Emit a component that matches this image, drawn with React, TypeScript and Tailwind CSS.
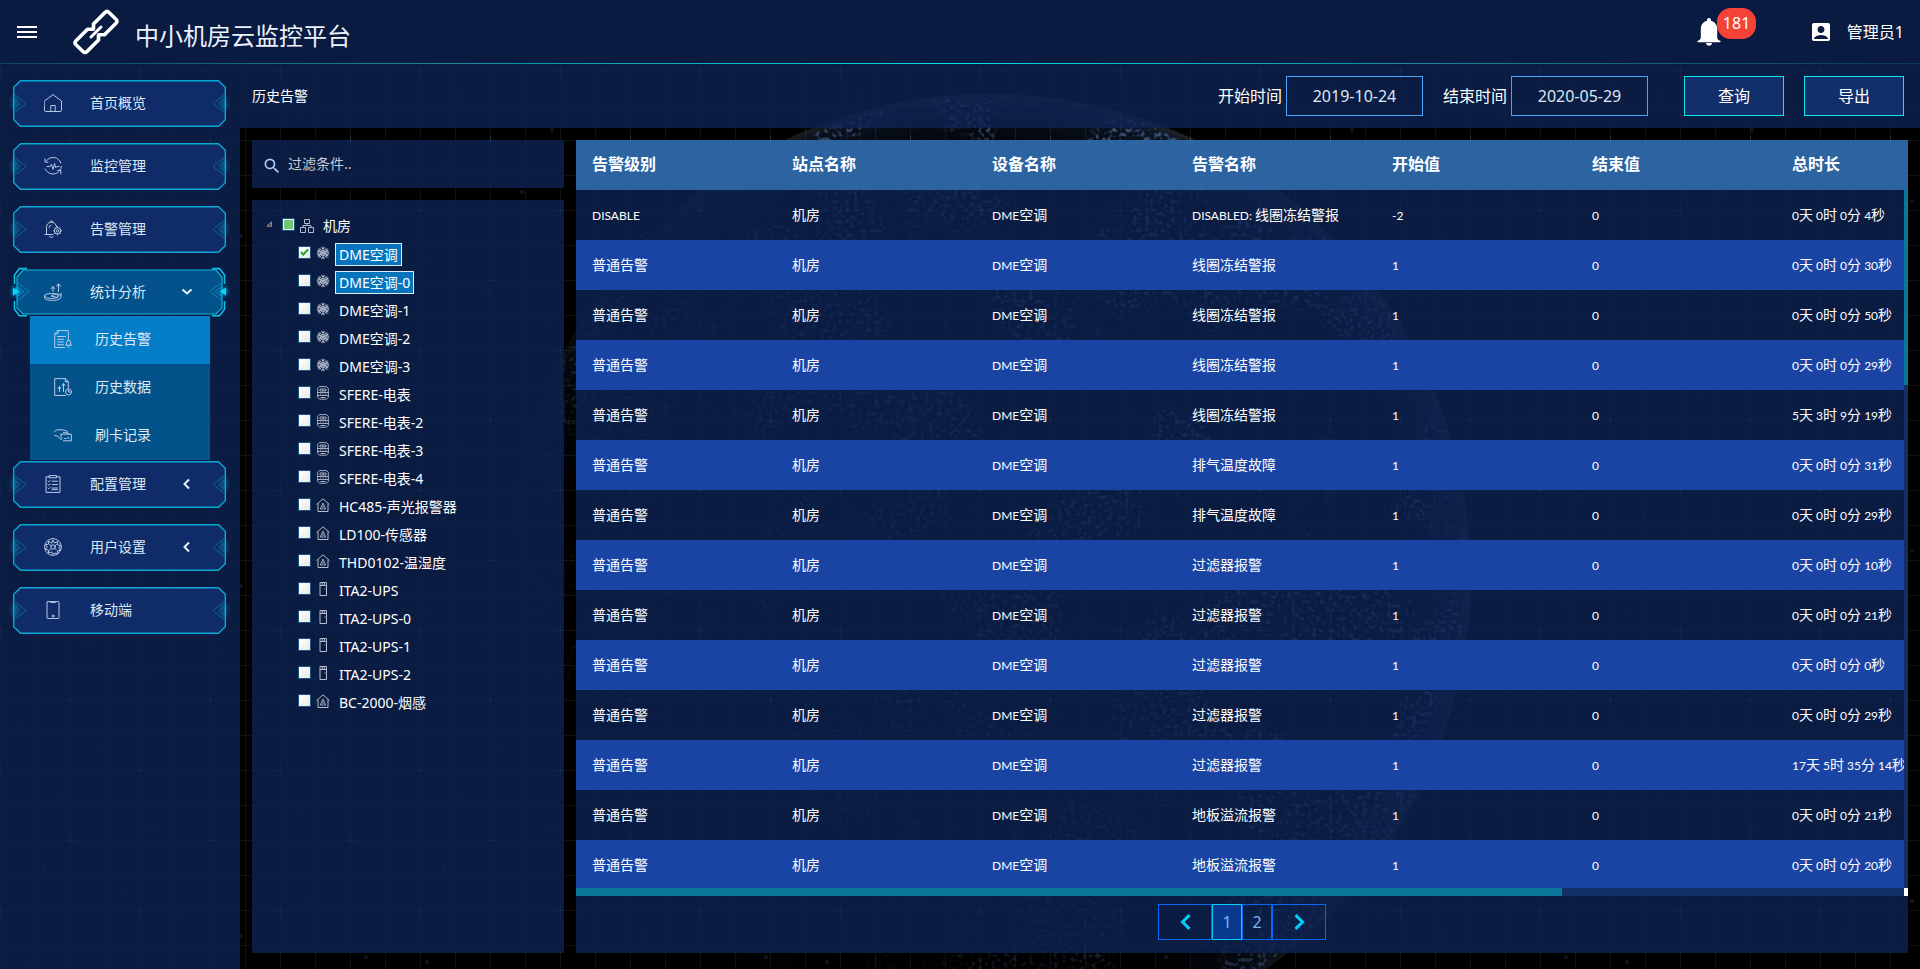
import type { ReactNode } from 'react';
import { MdAccountBox, MdSearch } from 'react-icons/md';

/* ---------- data ---------- */

type DeviceKind = 'fan' | 'meter' | 'house' | 'ups';

const devices: { name: string; kind: DeviceKind; checked?: boolean; selected?: boolean }[] = [
  { name: 'DME空调', kind: 'fan', checked: true, selected: true },
  { name: 'DME空调-0', kind: 'fan', selected: true },
  { name: 'DME空调-1', kind: 'fan' },
  { name: 'DME空调-2', kind: 'fan' },
  { name: 'DME空调-3', kind: 'fan' },
  { name: 'SFERE-电表', kind: 'meter' },
  { name: 'SFERE-电表-2', kind: 'meter' },
  { name: 'SFERE-电表-3', kind: 'meter' },
  { name: 'SFERE-电表-4', kind: 'meter' },
  { name: 'HC485-声光报警器', kind: 'house' },
  { name: 'LD100-传感器', kind: 'house' },
  { name: 'THD0102-温湿度', kind: 'house' },
  { name: 'ITA2-UPS', kind: 'ups' },
  { name: 'ITA2-UPS-0', kind: 'ups' },
  { name: 'ITA2-UPS-1', kind: 'ups' },
  { name: 'ITA2-UPS-2', kind: 'ups' },
  { name: 'BC-2000-烟感', kind: 'house' },
];

const columns = ['告警级别', '站点名称', '设备名称', '告警名称', '开始值', '结束值', '总时长'];

const rows: string[][] = [
  ['DISABLE', '机房', 'DME空调', 'DISABLED: 线圈冻结警报', '-2', '0', '0天 0时 0分 4秒'],
  ['普通告警', '机房', 'DME空调', '线圈冻结警报', '1', '0', '0天 0时 0分 30秒'],
  ['普通告警', '机房', 'DME空调', '线圈冻结警报', '1', '0', '0天 0时 0分 50秒'],
  ['普通告警', '机房', 'DME空调', '线圈冻结警报', '1', '0', '0天 0时 0分 29秒'],
  ['普通告警', '机房', 'DME空调', '线圈冻结警报', '1', '0', '5天 3时 9分 19秒'],
  ['普通告警', '机房', 'DME空调', '排气温度故障', '1', '0', '0天 0时 0分 31秒'],
  ['普通告警', '机房', 'DME空调', '排气温度故障', '1', '0', '0天 0时 0分 29秒'],
  ['普通告警', '机房', 'DME空调', '过滤器报警', '1', '0', '0天 0时 0分 10秒'],
  ['普通告警', '机房', 'DME空调', '过滤器报警', '1', '0', '0天 0时 0分 21秒'],
  ['普通告警', '机房', 'DME空调', '过滤器报警', '1', '0', '0天 0时 0分 0秒'],
  ['普通告警', '机房', 'DME空调', '过滤器报警', '1', '0', '0天 0时 0分 29秒'],
  ['普通告警', '机房', 'DME空调', '过滤器报警', '1', '0', '17天 5时 35分 14秒'],
  ['普通告警', '机房', 'DME空调', '地板溢流报警', '1', '0', '0天 0时 0分 21秒'],
  ['普通告警', '机房', 'DME空调', '地板溢流报警', '1', '0', '0天 0时 0分 20秒'],
];

/* ---------- icons ---------- */

function LineIcon({ size = 18, children }: { size?: number; children: ReactNode }) {
  return (
    <svg
      width={size}
      height={size}
      viewBox="0 0 18 18"
      fill="none"
      stroke="#b9c8e6"
      strokeWidth="1"
      strokeLinecap="round"
      strokeLinejoin="round"
      aria-hidden="true"
      className="shrink-0"
    >
      {children}
    </svg>
  );
}

const HomeIcon = () => (
  <LineIcon>
    <path d="M.5 7 9 .6 17.500 7v9.500q0 1-1 1h-15q-1 0-1-1z" />
    <path d="M6.800 17.500v-6h4.400v6" />
  </LineIcon>
);

const PulseIcon = () => (
  <LineIcon>
    <path d="M2.500 3.500A8.300 8.300 0 0 1 16.800 6M17.400 9.500a8.400 8.400 0 0 1-1.600 4M14.800 14.700A8.300 8.300 0 0 1 1.200 12" />
    <path d="M1 1.800v3.400h3M16.800 16.800v-3.300h-3" />
    <path d="M3 9.500h3l1.400-2.300L9 12.400l1.500-6 1.300 4.400 1-1.300H15" />
  </LineIcon>
);

const BellGearIcon = () => (
  <LineIcon>
    <path d="M1 14.500h8M2.500 14.300V7.500a5 5 0 0 1 10-.8M6 2.400a1.500 1.500 0 0 1 3 0M5.500 16.200a2 2 0 0 0 3.600.3" />
    <path d="M5 7.500a2.600 2.600 0 0 1 2-2.300" />
    <circle cx="13.500" cy="10.800" r="3.200" />
    <circle cx="13.500" cy="10.800" r="1.200" />
    <path d="M13.500 6.600v1M13.500 14v1M9.500 10.800h.8M16.700 10.800h.8M10.600 7.900l.7.700M15.700 13l.7.700M16.400 7.900l-.7.700M11.300 13l-.7.700" />
  </LineIcon>
);

const StatsIcon = () => (
  <LineIcon>
    <ellipse cx="7.500" cy="13" rx="7" ry="2.500" />
    <path d="M.5 13v1.800c0 1.500 3 2.600 7 2.600 5.500 0 9-1 9.500-3.400v-3.600" />
    <path d="M7.500 13 11 10.800c3 0 5.500.6 6 1.800M7.500 13l6 1.600" />
    <path d="M9 8.500V4M7.400 5.500 9 3.500l1.600 2M14.500 8.500V1.200M12.600 3.200l1.900-2.400 1.900 2.400" />
  </LineIcon>
);

const AlarmDocIcon = () => (
  <LineIcon>
    <path d="M10.500 17.500h-9.800V3.800L4 .6h10.300v8M.7 3.800H4V.6" />
    <path d="M3.500 6.500h8M3.500 9.300h6M3.500 12h6M3.500 14.700h6" />
    <path d="M11.800 15.200h5.700M12.600 15v-2.600a2 2 0 0 1 4 0V15M14 17h1.300M14.600 9.500v.8" />
  </LineIcon>
);

const DataDocIcon = () => (
  <LineIcon>
    <path d="M11.500 17.500H.7V.6h10.600l3 3.200v7M11.300.6v3.200h3" />
    <path d="M5.500 13.500V9M4 10.500l1.500-2 1.500 2M9.500 13.500V6M8 7.500l1.500-2 1.500 2" />
    <circle cx="14.500" cy="14" r="3" />
    <path d="M14.500 12.300V14h1.400" />
  </LineIcon>
);

const CardHandIcon = () => (
  <LineIcon>
    <path d="M.6 5.500 3 3.800h5.500L12.800 5c1.300.5 1.300 1.800 0 1.900l-3.300-.3M.6 9.500l2.600.4 3.300 3.200c1.200.8 2.200-.2 1.500-1.300" />
    <path d="M7 8.200h10.400v6.600H9.500M12.800 6.800l2.500 1.400M7 8.200v3" />
    <path d="M10.500 12.500h1M13 12.500l1.200-1.400 1 1.200" />
  </LineIcon>
);

const ClipboardIcon = () => (
  <LineIcon>
    <path d="M5.500 1.800H2v15.600h14V1.800h-3.500M5.500.6h7v2.200h-7z" />
    <path d="M8 6.200h5.500M8 9.600h5.500M8 13h5.500M8 14.600h5.500" />
    <path d="m4 6 .8.8L6 5.500M4 9.500l.8.800L6 9M4 13l.8.800L6 12.500" />
  </LineIcon>
);

const UserSettingsIcon = () => (
  <LineIcon>
    <circle cx="9" cy="9" r="8.400" />
    <circle cx="9" cy="9" r="2.200" />
    <path d="M9 2.200 10.500 5l2.900-1.400.2 3.200 2.900.7-1.900 2.400 1.900 2.300-3 .9-.2 3-2.900-1.200L9 16.500l-1.500-2.600-2.900 1.200-.2-3-3-.9 1.900-2.300L1.500 6.800l2.900-.7.2-3.100L7.500 5z" />
    <path d="M5.500 6.500 7.200 8M12.500 6.500 10.800 8M5.500 12l1.700-1.500M12.500 12l-1.700-1.500" />
  </LineIcon>
);

const PhoneIcon = () => (
  <LineIcon>
    <rect x="3" y=".6" width="12" height="16.900" rx=".8" />
    <path d="M6.500.8v.8h5V.8" />
    <circle cx="9" cy="15" r="1" />
  </LineIcon>
);

function TreeIcon({ kind }: { kind: DeviceKind | 'site' }) {
  return (
    <svg
      width="14"
      height="14"
      viewBox="0 0 14 14"
      fill="none"
      stroke="#b3bccd"
      strokeWidth="1"
      aria-hidden="true"
      className="shrink-0"
    >
      {kind === 'site' && (
        <path d="M4.500.5h5v4h-5zM.5 8.500h5v5h-5zM8.500 8.500h5v5h-5zM7 4.500v2M3 8.500v-2h8v2" />
      )}
      {kind === 'fan' && (
        <g strokeWidth="1">
          <path d="M7 .8v12.400M1.600 3.900l10.800 6.200M1.600 10.100l10.800-6.200M.8 7h12.400" />
          <path d="M4 2.500 5.500 5M10 2.500 8.500 5M4 11.500 5.500 9M10 11.500 8.500 9" />
          <path d="m5 1.300 2 1.700 2-1.700M5 12.700l2-1.700 2 1.700M1 6l2.500-.5L3 2.400M13 8l-2.500.5.5 3.100M1 8l2.500.5-.5 3.100M13 6l-2.500-.5.500-3.100" />
          <circle cx="7" cy="7" r="2.400" />
        </g>
      )}
      {kind === 'meter' && (
        <g strokeWidth=".9">
          <path d="M3.500.6h7l1.800 1.700v9l-1.800 1.900h-7L1.700 11.300v-9z" />
          <path d="M4 3h6v2H4zM1 6.500h12M7 3v2M1 9.500h12M4 8h1.200M6.500 8h1.200M9 8h1.200M4.500 11.500h5" />
        </g>
      )}
      {kind === 'house' && (
        <g>
          <path d="M.6 6.500 7 .8l6.400 5.700M2 5.500v8h10v-8" />
          <path d="m7 5-2.700 6h5.400zM7 7.500v2.500" strokeWidth=".9" />
        </g>
      )}
      {kind === 'ups' && <path d="M4 .5h6.500v13H4zM4 3.500h6.500M6.200.5v3M8.300.5v3M8.500 7h1" />}
    </svg>
  );
}

function ChainLogo() {
  return (
    <svg width="46" height="46" viewBox="0 0 46 46" fill="none" stroke="#fff" aria-hidden="true">
      <g strokeWidth="3.600" strokeLinejoin="round" strokeLinecap="round">
        <path d="M20.500 20v-5L32 3.500q2-2 4 0l7 6.700q2 2 0 4L31.500 25.700h-5" />
        <path d="M25.500 26v5L14 42.500q-2 2-4 0l-7-6.700q-2-2 0-4L14.500 20.300h5" />
      </g>
      <path d="M18 28 28 18" strokeWidth="3" strokeLinecap="round" />
    </svg>
  );
}

/* ---------- sidebar ---------- */

function ButtonFrame({ active }: { active?: boolean }) {
  return (
    <svg
      width="100%"
      height="100%"
      viewBox="0 0 213 47"
      preserveAspectRatio="none"
      fill="none"
      aria-hidden="true"
      className="absolute inset-0 overflow-visible"
    >
      {active ? (
        <>
          <path d="M10 1h193l6 7v31l-6 6H10l-6-6V8z" fill="#03528c" stroke="#0bb5dd" strokeWidth="1.200" />
          <path
            d="M14-.4H6.500L1.500 6v9M199-.4h7.500l5 6.400v9M14 46.700H6.500l-5-6.400V32M199 46.700h7.500l5-6.400V32"
            stroke="#08c4ec"
            strokeWidth="1.600"
          />
          <path d="m4 13 12 9.500L4 32M4 17.500l7 5-7 5" stroke="#0b88b0" />
          <path d="m209 13-12 9.500 12 9.500M209 17.500l-7 5 7 5" stroke="#0b88b0" />
          <path d="m0 17.500 7 5-7 5zM213 17.500l-6 5 6 5z" fill="#00d8ff" filter="url(#glow)" />
          <path d="m0 18.500 7 4-7 4zM213 18.500l-6 4 6 4z" fill="#00d8ff" />
        </>
      ) : (
        <>
          <path d="M7.500.7h198l6.800 6.500v32.600l-6.800 6.500H7.500L.7 39.800V7.200z" fill="#0f2c68" />
          <path d="M1.500 17v12M211.500 17v12" stroke="#00a6d6" strokeOpacity=".55" strokeWidth="4" filter="url(#glow)" />
          <path d="M7.500.7h198l6.800 6.500v32.600l-6.800 6.500H7.500L.7 39.800V7.200z" stroke="#08a9d3" strokeWidth="1.400" />
          <path d="m1 14 12 9.500L1 33M1 18.500l6 5-6 5" stroke="#0a6591" />
          <path d="m212 14-12 9.500 12 9.500M212 18.500l-6 5 6 5" stroke="#0a6591" />
        </>
      )}
    </svg>
  );
}

function Caret({ open }: { open?: boolean }) {
  return (
    <svg width="12" height="12" viewBox="0 0 12 12" fill="none" stroke="#e8eef8" strokeWidth="2" aria-hidden="true">
      <path d={open ? 'm1.500 3.500 4.500 4 4.500-4' : 'M8 1.500 3.500 6 8 10.500'} />
    </svg>
  );
}

function MenuButton({ icon, label, caret, active }: { icon: ReactNode; label: string; caret?: boolean; active?: boolean }) {
  return (
    <button type="button" className="relative flex h-[47px] w-full items-center pb-0.5 pl-[31px] pr-[33px] text-sm text-[#dfe8f6]">
      <ButtonFrame active={active} />
      <span className="relative">{icon}</span>
      <span className="relative ml-7 flex-1 text-left">{label}</span>
      {caret && (
        <span className="relative">
          <Caret open={active} />
        </span>
      )}
    </button>
  );
}

function SubItem({ icon, label, active }: { icon: ReactNode; label: string; active?: boolean }) {
  return (
    <li className={active ? 'bg-[#037ec7]' : ''}>
      <a href="#" className="flex h-12 items-center gap-[23px] pb-0.5 pl-6 text-sm text-[#dfe8f6]">
        {icon}
        {label}
      </a>
    </li>
  );
}

function Sidebar() {
  return (
    <nav className="w-60 shrink-0 bg-[#0d2352]/80 pt-4 pl-[13px] pr-[14px]">
      <ul className="flex flex-col gap-4">
        <li><MenuButton icon={<HomeIcon />} label="首页概览" /></li>
        <li><MenuButton icon={<PulseIcon />} label="监控管理" /></li>
        <li><MenuButton icon={<BellGearIcon />} label="告警管理" /></li>
        <li>
          <MenuButton icon={<StatsIcon />} label="统计分析" caret active />
          <ul className="ml-[17px] mr-4 bg-[#04528a]">
            <SubItem icon={<AlarmDocIcon />} label="历史告警" active />
            <SubItem icon={<DataDocIcon />} label="历史数据" />
            <SubItem icon={<CardHandIcon />} label="刷卡记录" />
          </ul>
        </li>
        <li className="-mt-[15px]"><MenuButton icon={<ClipboardIcon />} label="配置管理" caret /></li>
        <li><MenuButton icon={<UserSettingsIcon />} label="用户设置" caret /></li>
        <li><MenuButton icon={<PhoneIcon />} label="移动端" /></li>
      </ul>
    </nav>
  );
}

/* ---------- backdrop ---------- */

const specks = [
  [18, 22], [61, 96], [103, 48], [152, 130], [201, 71], [256, 18], [298, 112], [333, 60], [377, 146], [44, 168],
  [122, 192], [183, 214], [241, 236], [312, 201], [366, 257], [27, 262], [88, 291], [147, 322], [219, 301], [285, 338],
];

function Backdrop() {
  return (
    <svg width="100%" height="100%" className="absolute inset-0 -z-10 bg-black" aria-hidden="true">
      <defs>
        <pattern id="grid" width="140" height="140" patternUnits="userSpaceOnUse">
          <path
            d="M.5 0v140M35.500 0v140M70.500 0v140M105.500 0v140M0 .5h140M0 35.500h140M0 70.500h140M0 105.500h140"
            stroke="#7d8da8"
            strokeOpacity=".12"
          />
          <path d="M0 70.500h4M136 70.500h4M.5 66v9M66 .5h9M70.500 0v4M70.500 136v4" stroke="#9fb0cc" strokeOpacity=".2" />
        </pattern>
        <pattern id="specks" width="400" height="350" patternUnits="userSpaceOnUse">
          {specks.map(([x, y]) => (
            <circle key={`${x}-${y}`} cx={x} cy={y} r="2" fill="#5e7fb8" fillOpacity=".18" />
          ))}
        </pattern>
        <radialGradient id="rim">
          <stop offset=".86" stopColor="#1d3a6b" stopOpacity="0" />
          <stop offset=".98" stopColor="#2a4a80" stopOpacity=".28" />
          <stop offset="1" stopColor="#6d7076" stopOpacity=".3" />
        </radialGradient>
        <linearGradient id="fade" gradientUnits="userSpaceOnUse" x1="520" y1="720" x2="1080" y2="260">
          <stop offset="0" stopColor="#fff" stopOpacity="0" />
          <stop offset="1" stopColor="#fff" />
        </linearGradient>
        <mask id="lit">
          <rect width="100%" height="100%" fill="url(#fade)" />
        </mask>
        <filter id="dots" x="0" y="0" width="1" height="1">
          <feTurbulence type="fractalNoise" baseFrequency=".009" numOctaves="3" seed="7" />
          <feColorMatrix values="0 0 0 0 0  0 0 0 0 0  0 0 0 0 0  9 0 0 0 -4.200" result="land" />
          <feTurbulence type="fractalNoise" baseFrequency=".24" numOctaves="1" seed="3" />
          <feColorMatrix values="0 0 0 0 .14  0 0 0 0 .28  0 0 0 0 .6  0 5 0 0 -2.500" />
          <feComposite in2="land" operator="in" />
          <feComposite in2="SourceAlpha" operator="in" />
        </filter>
        <filter id="glow" x="-400%" y="-100%" width="900%" height="300%">
          <feGaussianBlur stdDeviation="2" />
        </filter>
      </defs>
      <g mask="url(#lit)">
        <circle cx="990" cy="575" r="481" fill="url(#rim)" />
        <circle cx="990" cy="575" r="478" fill="#fff" filter="url(#dots)" opacity=".5" />
      </g>
      <rect width="100%" height="100%" fill="url(#grid)" />
      <rect width="100%" height="100%" fill="url(#specks)" />
    </svg>
  );
}

/* ---------- top bar ---------- */

function TopBar() {
  return (
    <header className="shrink-0 bg-[#0a1b42]">
      <div className="flex h-[63px] items-center pl-[17px] pr-4">
        <button type="button" aria-label="切换菜单" className="flex w-5 flex-col gap-[3px]">
          <span className="h-0.5 bg-white" />
          <span className="h-0.5 bg-white" />
          <span className="h-0.5 bg-white" />
        </button>
        <a href="#" className="ml-9 flex items-center gap-4">
          <ChainLogo />
          <h1 className="pt-2 text-2xl leading-9 text-[#eef3fb]">中小机房云监控平台</h1>
        </a>
        <button type="button" aria-label="告警通知" className="relative ml-auto h-7 w-6">
          <svg width="24" height="28" viewBox="0 0 24 28" fill="#fff" aria-hidden="true">
            <path d="M12 0c1.200 0 2 .8 2 2v.8c3.800.9 6.200 4.200 6.200 8.200v8.500c0 1.700 1.200 2.500 2.800 3.200.9.400.8 1.500 0 1.500H1c-.8 0-.9-1.100 0-1.500 1.600-.7 2.800-1.500 2.800-3.200V11c0-4 2.400-7.300 6.200-8.200V2c0-1.200.8-2 2-2z" />
            <path d="M9 25h6c-.2 1.700-1.400 2.700-3 2.700S9.200 26.700 9 25z" />
          </svg>
          <span className="absolute -top-2.5 left-5 rounded-[14px] bg-[#f44336] px-1.5 py-1 text-base leading-[23px] text-white">181</span>
        </button>
        <a href="#" className="ml-[88px] flex items-center gap-3.5 text-base text-white">
          <MdAccountBox size={24} />
          管理员1
        </a>
      </div>
      <div className="h-px bg-linear-to-r from-[#0d4562] via-[#05e0e0] to-[#0d3558]" />
    </header>
  );
}

/* ---------- toolbar ---------- */

function DateField({ id, label, value }: { id: string; label: string; value: string }) {
  return (
    <div className="flex items-center gap-1">
      <label htmlFor={id}>{label}</label>
      <input
        id={id}
        type="text"
        defaultValue={value}
        className="h-10 w-[137px] border border-[#4aa3f7] bg-transparent text-center text-[#dde7f5]"
      />
    </div>
  );
}

function Toolbar() {
  const button = 'h-10 w-[100px] border border-[#0ce8ec] bg-[#122f6b] text-white';
  return (
    <div className="flex h-16 shrink-0 items-center bg-[#0d2352]/80 pl-3 pr-4 text-base text-white">
      <h2 className="mr-auto text-sm">历史告警</h2>
      <div className="flex gap-5">
        <DateField id="start" label="开始时间" value="2019-10-24" />
        <DateField id="end" label="结束时间" value="2020-05-29" />
      </div>
      <div className="ml-9 flex gap-5">
        <button type="button" className={button}>查询</button>
        <button type="button" className={button}>导出</button>
      </div>
    </div>
  );
}

/* ---------- device tree ---------- */

function TreeCheck({ id, state }: { id: string; state: 'on' | 'off' | 'partial' }) {
  return (
    <span className="relative -mt-1 size-[13px] shrink-0">
      <input
        id={id}
        type="checkbox"
        defaultChecked={state === 'on'}
        className="block size-[13px] appearance-none border border-[#1c5180] bg-linear-to-br from-white to-[#e9e9e4]"
      />
      {state === 'on' && (
        <svg width="9" height="9" viewBox="0 0 9 9" className="pointer-events-none absolute top-0.5 left-0.5" fill="none" stroke="#1da526" strokeWidth="2" aria-hidden="true">
          <path d="m1 4 2.300 2.600L8 1.300" />
        </svg>
      )}
      {state === 'partial' && <span className="pointer-events-none absolute inset-0.5 bg-[#71c671]" />}
    </span>
  );
}

function DeviceTree() {
  return (
    <div className="flex-1 bg-[#0d2352]/80 pt-3 text-sm text-white">
      <div className="flex h-7 items-center pl-3.5">
        <svg width="6" height="6" viewBox="0 0 6 6" className="-mt-1 mr-2.5 shrink-0" fill="#444" stroke="#a8a8a8" strokeWidth=".8" aria-hidden="true">
          <path d="M5.500.8v4.700L.8 5z" />
        </svg>
        <TreeCheck id="site" state="partial" />
        <span className="mx-[5px] pr-1"><TreeIcon kind="site" /></span>
        <label htmlFor="site">机房</label>
      </div>
      <ul>
        {devices.map((d, i) => (
          <li key={d.name} className="flex h-7 items-center pl-[46px]">
            <TreeCheck id={`device-${i}`} state={d.checked ? 'on' : 'off'} />
            <span className="mx-[5px] pb-0.5"><TreeIcon kind={d.kind} /></span>
            <label
              htmlFor={`device-${i}`}
              className={
                d.selected
                  ? 'border border-[#dcecf8] bg-[#0674bd] px-[3px] leading-[21px]'
                  : 'border border-transparent px-[3px] leading-[21px]'
              }
            >
              {d.name}
            </label>
          </li>
        ))}
      </ul>
    </div>
  );
}

/* ---------- alarm table ---------- */

/* Latin runs are set a step smaller than the Chinese text around them. */
function CellText({ text }: { text: string }) {
  return (
    <>
      {text.split(/([\x20-\x7e]+)/).filter(Boolean).map((part, i) =>
        /^[\x20-\x7e]/.test(part) ? (
          <span key={i} className="font-['Lato','Noto_Sans_CJK_SC',sans-serif] text-xs">{part}</span>
        ) : (
          part
        ),
      )}
    </>
  );
}

function AlarmTable() {
  return (
    <div className="relative min-h-0 flex-1 overflow-hidden">
      <table className="w-[1400px] min-w-full table-fixed border-collapse text-left whitespace-nowrap text-white">
        <thead>
          <tr className="h-[50px] bg-[#3270b2]/85 text-base">
            {columns.map((c) => (
              <th key={c} scope="col" className="px-4 pb-0.5 font-bold">{c}</th>
            ))}
          </tr>
        </thead>
        <tbody className="text-sm">
          {rows.map((r, i) => (
            <tr key={i} className="h-[50px] even:bg-[#1a44a3]">
              {r.map((cell, j) => (
                <td key={j} className="px-4 py-0"><CellText text={cell} /></td>
              ))}
            </tr>
          ))}
        </tbody>
      </table>
      <div className="absolute top-[50px] right-0 bottom-0 w-1 bg-[#122f66]">
        <div className="h-[28%] bg-[#0b779b]" />
      </div>
    </div>
  );
}

function Pagination() {
  const cell = 'flex h-9 items-center justify-center border';
  return (
    <div className="flex justify-center pt-2 pb-[13px] text-base">
      <button type="button" aria-label="上一页" className={`${cell} w-[54px] border-[#0668f5]`}>
        <svg width="11" height="16" viewBox="0 0 11 16" fill="none" stroke="#00cffb" strokeWidth="3" aria-hidden="true">
          <path d="M9.500 1.200 2.500 8l7 6.800" />
        </svg>
      </button>
      <button type="button" className={`${cell} w-[30px] border-[#05ccf2] bg-[#073a8f] text-[#7db4f0]`}>1</button>
      <button type="button" className={`${cell} w-[30px] border-[#0668f5] text-[#7db4f0]`}>2</button>
      <button type="button" aria-label="下一页" className={`${cell} w-[54px] border-[#0668f5]`}>
        <svg width="11" height="16" viewBox="0 0 11 16" fill="none" stroke="#00cffb" strokeWidth="3" aria-hidden="true">
          <path d="m1.500 1.200 7 6.800-7 6.800" />
        </svg>
      </button>
    </div>
  );
}

/* ---------- page ---------- */

export default function App() {
  return (
    <div
      lang="zh-CN"
      className="relative isolate flex h-screen flex-col overflow-hidden font-['Noto_Sans','Noto_Sans_CJK_SC',sans-serif]"
    >
      <Backdrop />
      <TopBar />
      <div className="flex min-h-0 flex-1">
        <Sidebar />
        <main className="flex min-w-0 flex-1 flex-col">
          <Toolbar />
          <div className="flex min-h-0 flex-1 gap-3 px-3 pt-3 pb-4">
            <section className="flex w-[312px] shrink-0 flex-col gap-3">
              <div className="flex h-12 shrink-0 items-center gap-1.5 bg-[#0d2352]/80 pl-2.5 text-sm">
                <MdSearch size={20} className="mt-1 shrink-0 text-[#a9c9fb]" aria-hidden="true" />
                <input
                  type="text"
                  aria-label="过滤条件"
                  placeholder="过滤条件.."
                  className="min-w-0 flex-1 bg-transparent text-white placeholder:text-[#c6ccd6]"
                />
              </div>
              <DeviceTree />
            </section>
            <section className="flex min-w-0 flex-1 flex-col bg-[#0d2352]/80">
              <AlarmTable />
              <div className="flex h-2 shrink-0 bg-[#122f66]">
                <div className="w-[74%] bg-[#0b779b]" />
                <div className="ml-auto w-1 bg-white" />
              </div>
              <Pagination />
            </section>
          </div>
        </main>
      </div>
    </div>
  );
}
